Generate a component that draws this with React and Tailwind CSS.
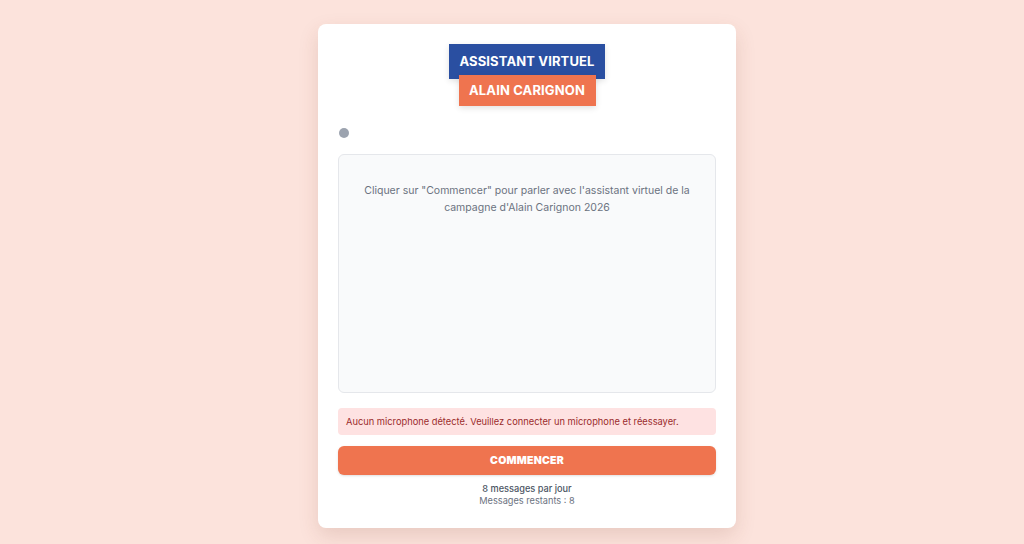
import React from "react";

const App = () => {
  return (
    <div className="min-h-screen w-full bg-[#fce3dc] flex justify-center pt-6 pl-[30px] font-['Inter','Noto_Sans',sans-serif]">
      <div className="w-[418px] h-[504px] bg-white rounded-lg shadow-[0_8px_20px_rgba(120,60,40,0.15)] px-5 pt-5 flex flex-col">
        <div className="flex flex-col items-center">
          <div className="h-[35px] w-[156px] bg-[#2a4fa1] text-white font-bold text-[13px] flex items-center justify-center shadow-[0_2px_6px_rgba(0,0,0,0.12)] tracking-[0.01em]">
            ASSISTANT VIRTUEL
          </div>
          <div className="-mt-1 h-[31px] w-[137px] bg-[#ef744f] text-white font-bold text-[13px] flex items-center justify-center shadow-[0_2px_6px_rgba(0,0,0,0.12)] tracking-[0.01em]">
            ALAIN CARIGNON
          </div>
        </div>

        <div className="mt-[22px] pl-[1px] h-[10px] flex items-center">
          <span className="w-[10px] h-[10px] rounded-full bg-[#9ca3af]"></span>
        </div>

        <div className="mt-[16px] h-[239px] bg-[#f9fafb] border border-[#e5e7eb] rounded-md pt-[27px]">
          <p className="text-center text-[10.5px] leading-[17px] text-[#6b7280]">
            <span className="block whitespace-nowrap">
              Cliquer sur "Commencer" pour parler avec l'assistant virtuel de la
            </span>
            <span className="block whitespace-nowrap">campagne d'Alain Carignon 2026</span>
          </p>
        </div>

        <div className="mt-[15px] h-[27px] bg-[#fee2e2] rounded flex items-center px-2 text-[9.3px] text-[#9b2c2c]">
          Aucun microphone détecté. Veuillez connecter un microphone et réessayer.
        </div>

        <button className="mt-[11px] h-[29px] w-full bg-[#ef744f] rounded-md text-white font-black text-[10.5px] tracking-[0.02em] shadow-sm">
          COMMENCER
        </button>

        <div className="mt-[8px] text-center text-[9.2px] leading-3">
          <div className="text-[#4b5563] font-medium">8 messages par jour</div>
          <div className="text-[#6b7280]">Messages restants : 8</div>
        </div>
      </div>
    </div>
  );
};

export default App;
